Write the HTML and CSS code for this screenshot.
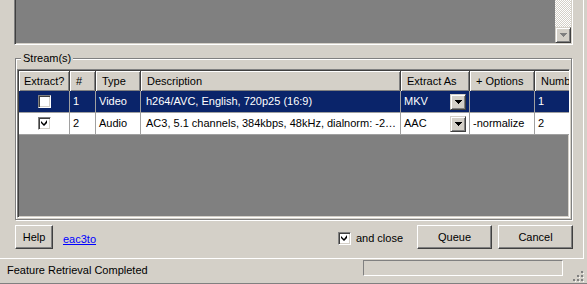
FILE: index.html
```html
<!DOCTYPE html>
<html>
<head>
<meta charset="utf-8">
<link rel="stylesheet" href="styles.css">
</head>
<body>
<div class="window">
  <div class="main">
    <div class="toplist">
      <div class="toplist-fill"></div>
      <div class="vscroll">
        <div class="track"></div>
        <div class="sbtn">
          <svg width="7" height="5" viewBox="0 0 7 5"><path d="M1 1h5v1h-1v1h-1v1h-1v-1h-1v-1h-1z" fill="#fff"/><path d="M0 0h7v1h-1v1h-1v1h-1v1h-1v-1h-1v-1h-1v-1h-1z" fill="#808080"/></svg>
        </div>
      </div>
    </div>

    <div class="group">
      <span class="legend">Stream(s)</span>
      <div class="listview">
        <div class="lv-row lv-header">
          <div class="hcell">Extract?</div>
          <div class="hcell">#</div>
          <div class="hcell">Type</div>
          <div class="hcell">Description</div>
          <div class="hcell">Extract As</div>
          <div class="hcell">+ Options</div>
          <div class="hcell">Number</div>
        </div>
        <div class="lv-row lv-item selected">
          <div class="cell center"><span class="chk"></span></div>
          <div class="cell">1</div>
          <div class="cell">Video</div>
          <div class="cell desc">h264/AVC, English, 720p25 (16:9)</div>
          <div class="cell combo"><span class="combo-text">MKV</span><span class="combo-btn"><svg width="7" height="4" viewBox="0 0 7 4"><path d="M0 0h7v1h-1v1h-1v1h-1v1h-1v-1h-1v-1h-1v-1h-1z" fill="#000"/></svg></span></div>
          <div class="cell"></div>
          <div class="cell">1</div>
        </div>
        <div class="lv-row lv-item">
          <div class="cell center"><span class="chk checked"><svg width="7" height="7" viewBox="0 0 7 7"><path d="M6 0v3L3 6 0 3V1l3 3 3-4z" fill="#000"/></svg></span></div>
          <div class="cell">2</div>
          <div class="cell">Audio</div>
          <div class="cell desc">AC3, 5.1 channels, 384kbps, 48kHz, dialnorm: -2…</div>
          <div class="cell combo"><span class="combo-text">AAC</span><span class="combo-btn"><svg width="7" height="4" viewBox="0 0 7 4"><path d="M0 0h7v1h-1v1h-1v1h-1v1h-1v-1h-1v-1h-1v-1h-1z" fill="#000"/></svg></span></div>
          <div class="cell">-normalize</div>
          <div class="cell">2</div>
        </div>
      </div>
    </div>

    <div class="buttonrow">
      <div class="btn btn-help">Help</div>
      <a class="link" href="#">eac3to</a>
      <div class="spacer"></div>
      <span class="chk checked small-chk"><svg width="7" height="7" viewBox="0 0 7 7"><path d="M6 0v3L3 6 0 3V1l3 3 3-4z" fill="#000"/></svg></span>
      <span class="chk-label">and close</span>
      <div class="btn btn-queue">Queue</div>
      <div class="btn btn-cancel">Cancel</div>
    </div>
  </div>

  <div class="statusbar">
    <span class="status-text">Feature Retrieval Completed</span>
    <div class="spacer"></div>
    <div class="progress"></div>
    <svg class="grip" width="11" height="11" viewBox="0 0 11 11">
      <rect x="8" y="0" width="2" height="2" fill="#808080"/>
      <rect x="4" y="4" width="2" height="2" fill="#808080"/><rect x="8" y="4" width="2" height="2" fill="#808080"/>
      <rect x="0" y="8" width="2" height="2" fill="#808080"/><rect x="4" y="8" width="2" height="2" fill="#808080"/><rect x="8" y="8" width="2" height="2" fill="#808080"/>
      <rect x="10" y="2" width="1" height="1" fill="#fff"/><rect x="6" y="6" width="1" height="1" fill="#fff"/><rect x="10" y="6" width="1" height="1" fill="#fff"/>
      <rect x="2" y="10" width="1" height="1" fill="#fff"/><rect x="6" y="10" width="1" height="1" fill="#fff"/><rect x="10" y="10" width="1" height="1" fill="#fff"/>
    </svg>
  </div>
</div>
</body>
</html>
```
FILE: styles.css
```css
* { box-sizing: border-box; }
html, body { margin: 0; padding: 0; }
body {
  width: 587px;
  height: 284px;
  overflow: hidden;
  background: #d4d0c8;
  font-family: "Liberation Sans", Arial, sans-serif;
  font-size: 11px;
  color: #000;
}
.window {
  display: flex;
  flex-direction: column;
  height: 284px;
}
.main {
  width: 584px;
  height: 259px;
  border-right: 1px solid #fff;
  border-bottom: 1px solid #fff;
  display: flex;
  flex-direction: column;
}

/* top list box (scrolled off) */
.toplist {
  margin-left: 14px;
  width: 559px;
  height: 45px;
  display: flex;
  border: 1px solid;
  border-top: none;
  border-color: #808080 #fff #fff #808080;
  box-shadow: inset 1px 0 0 #404040, inset -1px -1px 0 #d4d0c8;
  padding: 0 1px 1px 1px;
}
.toplist-fill { flex: 1; background: #808080; }
.vscroll {
  width: 16px;
  display: flex;
  flex-direction: column;
}
.track {
  flex: 1;
  background: repeating-conic-gradient(#fff 0 25%, #d4d0c8 0 50%) 0 0 / 2px 2px;
}
.sbtn {
  height: 16px;
  background: #d4d0c8;
  border: 1px solid;
  border-color: #d4d0c8 #404040 #404040 #d4d0c8;
  box-shadow: inset 1px 1px 0 #fff, inset -1px -1px 0 #808080;
  display: flex;
  align-items: center;
  justify-content: center;
}

/* group box */
.group {
  position: relative;
  margin: 13px 0 0 15px;
  width: 557px;
  height: 162px;
  border: 1px solid #808080;
  box-shadow: inset 1px 1px 0 #fff, 1px 1px 0 #fff;
  padding: 10px 1px 1px 1px;
}
.legend {
  position: absolute;
  top: -8px;
  left: 5px;
  padding: 0 2px 0 2px;
  background: #d4d0c8;
  line-height: 14px;
}

/* list view */
.listview {
  width: 553px;
  height: 149px;
  background: #808080;
  border: 1px solid;
  border-color: #808080 #fff #fff #808080;
  box-shadow: inset 1px 1px 0 #404040, inset -1px -1px 0 #d4d0c8;
  padding: 1px;
  overflow: hidden;
}
.lv-row {
  display: grid;
  grid-template-columns: 51px 26px 45px 260px 69px 65px 60px;
  width: 576px;
}
.lv-header { height: 20px; background: #d4d0c8; }
.hcell {
  padding-left: 6px;
  line-height: 21px;
  white-space: nowrap;
  overflow: hidden;
  box-shadow: inset 1px 1px 0 #fff, inset -1px -1px 0 #808080;
  border-right: 1px solid #404040;
}
.hcell:first-child { padding-left: 5px; }
.lv-item { height: 22px; background: #fff; }
.lv-item.selected { background: #0a246a; color: #fff; }
.cell {
  padding-left: 3px;
  line-height: 21px;
  white-space: nowrap;
  overflow: hidden;
  border-right: 1px solid #a0a0a0;
  border-bottom: 1px solid #a0a0a0;
}
.cell.desc { padding-left: 5px; padding-right: 4px; }
.cell.center {
  display: flex;
  align-items: center;
  justify-content: center;
  padding-left: 0;
}
.cell.combo {
  display: flex;
  align-items: center;
  padding-right: 3px;
}
.combo-text { flex: 1; }
.combo-btn {
  width: 16px;
  height: 16px;
  background: #d4d0c8;
  border: 1px solid;
  border-color: #d4d0c8 #404040 #404040 #d4d0c8;
  box-shadow: inset 1px 1px 0 #fff, inset -1px -1px 0 #808080;
  display: flex;
  align-items: center;
  justify-content: center;
}

/* checkbox */
.chk {
  width: 13px;
  height: 13px;
  background: #fff;
  border: 1px solid;
  border-color: #808080 #fff #fff #808080;
  box-shadow: inset 1px 1px 0 #404040, inset -1px -1px 0 #d4d0c8;
  display: inline-flex;
  align-items: center;
  justify-content: center;
}

/* bottom buttons */
.buttonrow {
  display: flex;
  align-items: center;
  margin-top: 5px;
  padding: 0 10px 0 15px;
  height: 24px;
}
.btn {
  height: 24px;
  background: #d4d0c8;
  border: 1px solid;
  border-color: #fff #404040 #404040 #fff;
  box-shadow: inset -1px -1px 0 #808080;
  display: flex;
  align-items: center;
  justify-content: center;
  padding-bottom: 1px;
}
.btn-help { width: 38px; }
.btn-queue { width: 75px; margin-left: 14px; }
.btn-cancel { width: 75px; margin-left: 6px; }
.link {
  margin-left: 10px;
  color: #0000ff;
  text-decoration: underline;
  padding-top: 3px;
}
.spacer { flex: 1; }
.small-chk { margin-top: 2px; }
.chk-label { margin-left: 5px; padding-top: 2px; }

/* status bar */
.statusbar {
  height: 25px;
  display: flex;
  align-items: center;
  padding-left: 7px;
  border-bottom: 1px solid #808080;
  position: relative;
}
.status-text { line-height: 14px; margin-top: -2px; }
.progress {
  width: 200px;
  height: 16px;
  border: 1px solid;
  border-color: #808080 #fff #fff #808080;
  margin-right: 24px;
  margin-top: -6px;
}
.grip {
  position: absolute;
  right: 3px;
  bottom: 1px;
}
```
